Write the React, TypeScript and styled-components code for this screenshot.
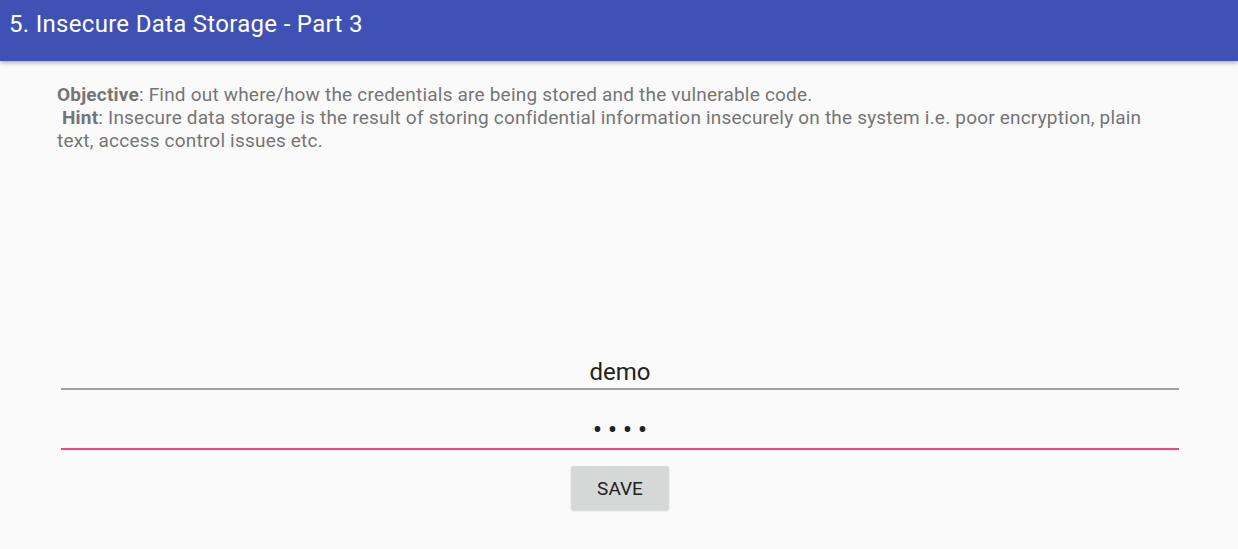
import React from "react";
import styled, { createGlobalStyle } from "styled-components";

const GlobalStyle = createGlobalStyle`
  html, body {
    margin: 0;
    padding: 0;
    background: #fafafa;
    font-family: Roboto, "Noto Sans", sans-serif;
  }
`;

const Screen = styled.div`
  width: 1238px;
  height: 549px;
  background: #fafafa;
  display: flex;
  flex-direction: column;
  overflow: hidden;
`;

const Toolbar = styled.header`
  height: 61px;
  background: #3f51b5;
  box-shadow: 0 2px 4px rgba(0, 0, 0, 0.3);
  display: flex;
  align-items: flex-start;
  padding: 10px 0 0 9px;
  box-sizing: border-box;
  position: relative;
  z-index: 1;
`;

const Title = styled.h1`
  margin: 0;
  color: #ffffff;
  font-size: 24px;
  letter-spacing: 0.3px;
  font-weight: 400;
  line-height: 28px;
`;

const Content = styled.main`
  flex: 1;
  display: flex;
  flex-direction: column;
  padding: 22px 57px 0 57px;
`;

const Description = styled.div`
  margin: 0;
  color: #757575;
  font-size: 19px;
  letter-spacing: 0.2px;
  line-height: 23px;
  height: 273px;
`;

const Label = styled.b<{ $indent?: boolean }>`
  font-weight: 700;
  margin-left: ${(p) => (p.$indent ? "5px" : "0")};
`;

const Field = styled.div<{ $focused?: boolean }>`
  margin: 0 2px 0 4px;
  height: ${(p) => (p.$focused ? "60px" : "34px")};
  display: flex;
  align-items: flex-end;
  justify-content: center;
  border-bottom: 2px solid ${(p) => (p.$focused ? "#ff4081" : "#a0a0a0")};
  box-sizing: border-box;
`;

const FieldText = styled.span<{ $dots?: boolean }>`
  color: #212121;
  font-size: ${(p) => (p.$dots ? "28px" : "24px")};
  letter-spacing: ${(p) => (p.$dots ? "5.5px" : "0")};
  margin-right: ${(p) => (p.$dots ? "-5.5px" : "0")};
  padding-bottom: ${(p) => (p.$dots ? "4px" : "2px")};
  line-height: 28px;
`;

const ButtonRow = styled.div`
  display: flex;
  justify-content: center;
  padding: 16px 0 0 2px;
`;

const SaveButton = styled.button`
  width: 98px;
  height: 44px;
  border: none;
  border-radius: 2px;
  background: #d6d7d7;
  color: #212121;
  font-family: Roboto, "Noto Sans", sans-serif;
  font-size: 19px;
  font-weight: 400;
  box-shadow: 0 1px 2px rgba(0, 0, 0, 0.15);
`;

export default function App() {
  return (
    <>
      <GlobalStyle />
      <Screen>
        <Toolbar>
          <Title>5. Insecure Data Storage - Part 3</Title>
        </Toolbar>
        <Content>
          <Description>
            <Label>Objective</Label>: Find out where/how the credentials are being stored and the vulnerable code.
            <br />
            <Label $indent>Hint</Label>: Insecure data storage is the result of storing confidential information
            insecurely on the system i.e. poor encryption, plain text, access control issues etc.
          </Description>
          <Field>
            <FieldText>demo</FieldText>
          </Field>
          <Field $focused>
            <FieldText $dots>••••</FieldText>
          </Field>
          <ButtonRow>
            <SaveButton>SAVE</SaveButton>
          </ButtonRow>
        </Content>
      </Screen>
    </>
  );
}
